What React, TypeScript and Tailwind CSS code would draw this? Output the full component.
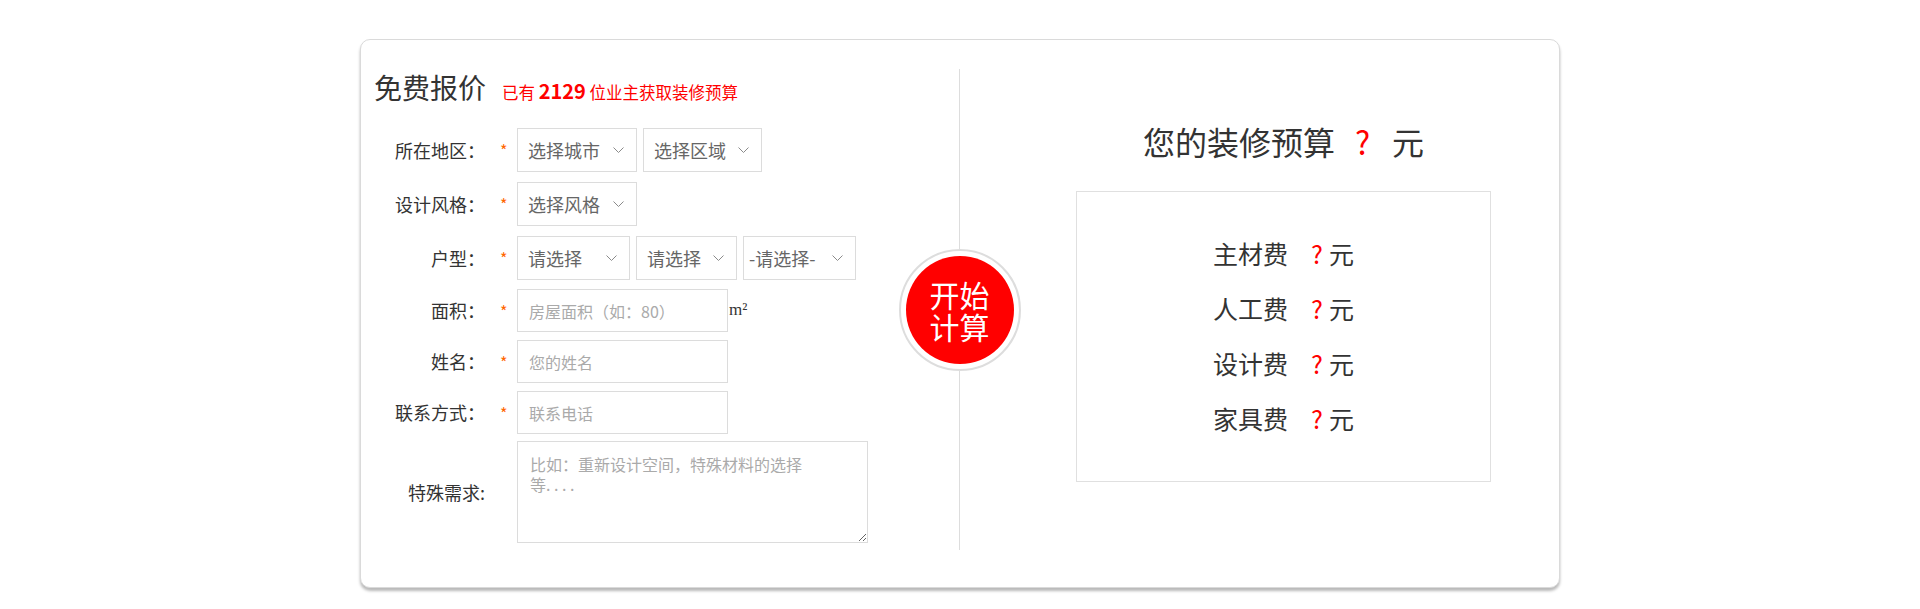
import React from "react";

const Chevron = () => (
    <svg
        width="11"
        height="6"
        viewBox="0 0 11 6"
        className="pointer-events-none absolute right-[13px] top-1/2 -translate-y-1/2"
    >
        <polyline points="0.5,0.5 5.5,5.5 10.5,0.5" fill="none" stroke="#8a8a8a" strokeWidth="1" />
    </svg>
);

function Select({ text, className, pad = "pl-[10px]" }: { text: string; className: string; pad?: string }) {
    return (
        <div className={`relative h-[44px] ${className}`}>
            <select
                defaultValue=""
                className={`h-full w-full appearance-none border border-[#dcdcdc] bg-white ${pad} pr-[26px] text-[18px] text-[#666] outline-none`}
            >
                <option value="">{text}</option>
            </select>
            <Chevron />
        </div>
    );
}

function Row({
    label,
    required = true,
    className = "",
    children,
}: {
    label: string;
    required?: boolean;
    className?: string;
    children: React.ReactNode;
}) {
    return (
        <div className={`flex items-center ${className}`}>
            <div className="w-[111px] text-right text-[18px] text-[#333]">{label}</div>
            <div className="w-[32px] pl-[15px] text-[16px] leading-[16px] text-[#ff6600]">{required ? "*" : ""}</div>
            {children}
        </div>
    );
}

const fees = ["主材费", "人工费", "设计费", "家具费"];

export default function App() {
    return (
        <div className="min-h-[609px] bg-white pt-[39px] font-['Noto_Sans_CJK_SC',sans-serif]">
            <div className="mx-auto flex h-[549px] w-[1200px] rounded-[10px] border border-[#dadada] bg-white shadow-[0_3px_3px_rgba(0,0,0,0.28)]">
                {/* 左侧表单 */}
                <div className="w-[598px] pl-[13px] pt-[29px]">
                    <div className="flex h-[36px] items-baseline">
                        <h2 className="text-[28px] leading-[36px] text-[#333]">免费报价</h2>
                        <p className="ml-[16px] text-[16.5px] leading-[36px] text-[#f00]">
                            已有 <span className="text-[20px] font-bold leading-none">2129</span> 位业主获取装修预算
                        </p>
                    </div>

                    <div className="mt-[23px]">
                        <Row label="所在地区：" className="mb-[10px]">
                            <Select text="选择城市" className="w-[120px]" />
                            <Select text="选择区域" className="ml-[6px] w-[119px]" />
                        </Row>
                        <Row label="设计风格：" className="mb-[10px]">
                            <Select text="选择风格" className="w-[120px]" />
                        </Row>
                        <Row label="户型：" className="mb-[9px]">
                            <Select text="请选择" className="w-[113px]" />
                            <Select text="请选择" className="ml-[6px] w-[101px]" />
                            <Select text="-请选择-" className="ml-[6px] w-[113px]" pad="pl-[5px]" />
                        </Row>
                        <Row label="面积：" className="mb-[8px]">
                            <input
                                placeholder="房屋面积（如：80）"
                                className="h-[43px] w-[211px] border border-[#dcdcdc] px-[11px] text-[16px] text-[#666] outline-none placeholder:text-[#aaa]"
                            />
                            <span className="ml-[1px] self-start pt-[8px] font-['Liberation_Serif',serif] text-[17px] text-[#333]">m²</span>
                        </Row>
                        <Row label="姓名：" className="mb-[8px]">
                            <input
                                placeholder="您的姓名"
                                className="h-[43px] w-[211px] border border-[#dcdcdc] px-[11px] text-[16px] text-[#666] outline-none placeholder:text-[#aaa]"
                            />
                        </Row>
                        <Row label="联系方式：" className="mb-[7px]">
                            <input
                                placeholder="联系电话"
                                className="h-[43px] w-[211px] border border-[#dcdcdc] px-[11px] text-[16px] text-[#666] outline-none placeholder:text-[#aaa]"
                            />
                        </Row>
                        <Row label="特殊需求:" required={false}>
                            <textarea
                                placeholder={"比如：重新设计空间，特殊材料的选择\n等. . . ."}
                                className="h-[102px] w-[351px] border border-[#dcdcdc] px-[12px] pt-[12px] text-[16px] leading-[20px] text-[#666] outline-none placeholder:text-[#aaa]"
                            />
                        </Row>
                    </div>
                </div>

                {/* 分隔线 + 开始计算 */}
                <div className="flex w-px flex-col pb-[37px] pt-[29px]">
                    <div className="relative flex-1 bg-[#dddddd]">
                        <button className="absolute left-1/2 top-1/2 h-[122px] w-[122px] -translate-x-1/2 -translate-y-1/2 rounded-full border-2 border-[#dddddd] bg-white p-[5px]">
                            <span className="flex h-full w-full items-center justify-center rounded-full bg-[#f00] text-[30px] leading-[32px] text-white">
                                开始
                                <br />
                                计算
                            </span>
                        </button>
                    </div>
                </div>

                {/* 右侧预算 */}
                <div className="flex-1 pl-[48px] pt-[81px]">
                    <div className="text-center text-[32px] leading-[40px] text-[#333]">
                        您的装修预算<span className="ml-[20px] text-[#f00]">?</span>
                        <span className="ml-[22px]">元</span>
                    </div>
                    <div className="mx-auto mt-[30px] h-[291px] w-[415px] border border-[#e0e0e0] pt-[34px]">
                        {fees.map((f) => (
                            <div key={f} className="text-center text-[25px] leading-[55px] text-[#333]">
                                {f}
                                <span className="ml-[23px] text-[#f00]">?</span>
                                <span className="ml-[6px]">元</span>
                            </div>
                        ))}
                    </div>
                </div>
            </div>
        </div>
    );
}
